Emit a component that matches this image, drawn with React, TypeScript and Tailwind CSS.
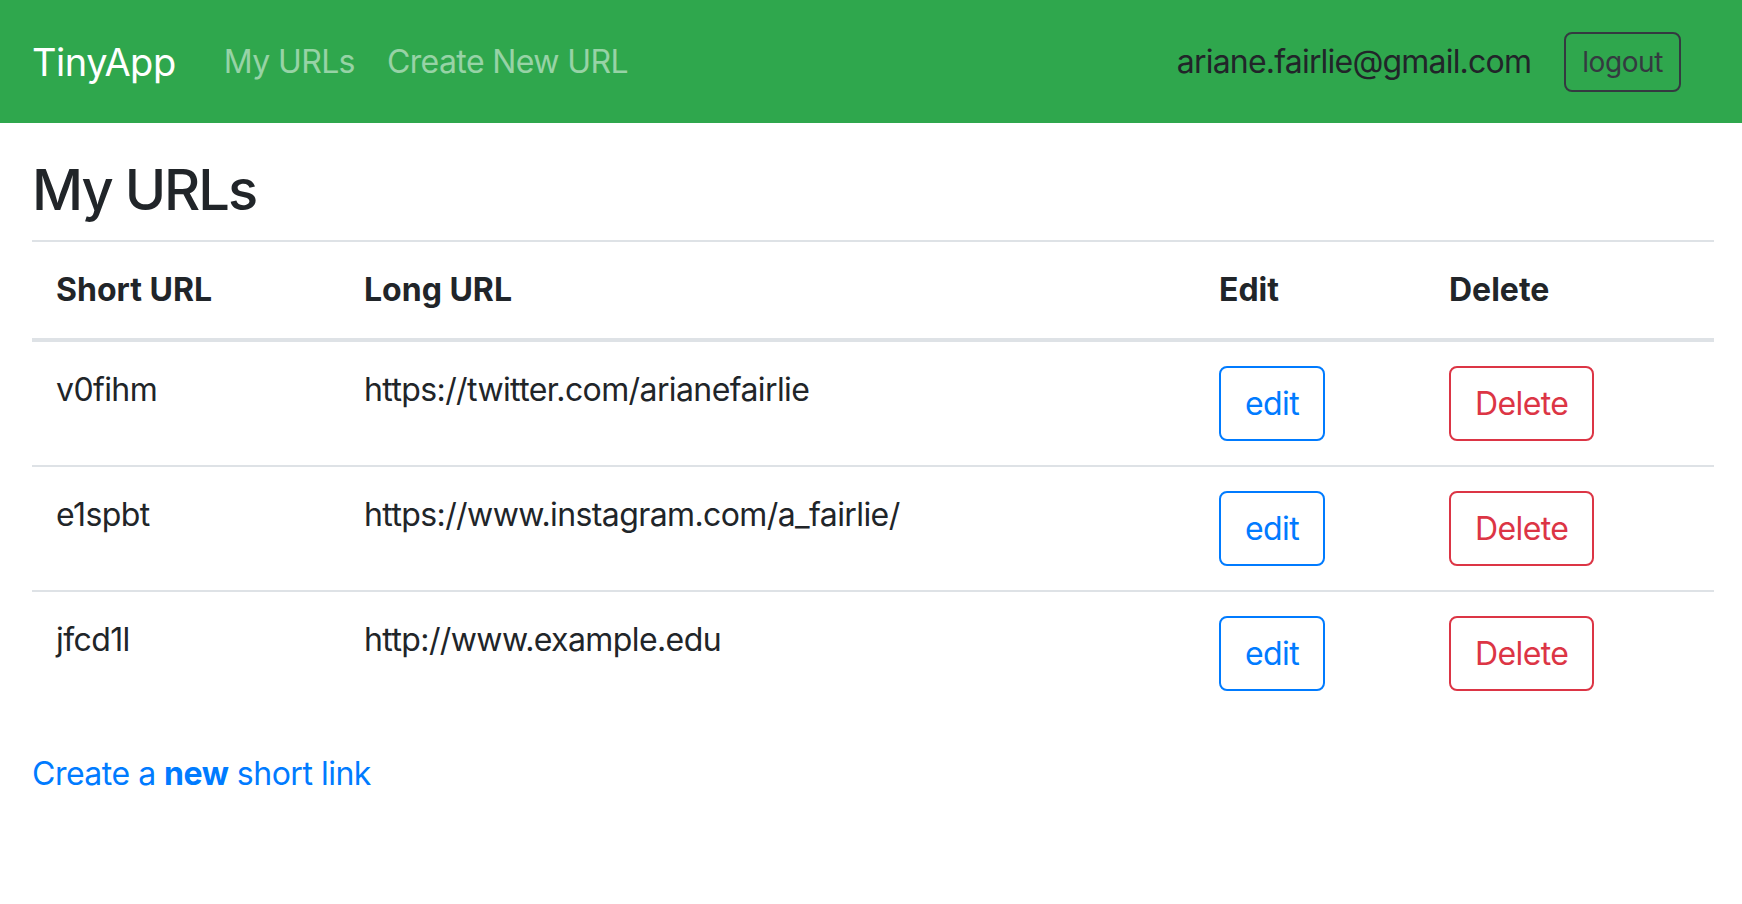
import React from 'react';

interface ShortUrl {
    id: string;
    longURL: string;
}

const urls: ShortUrl[] = [
    { id: 'v0fihm', longURL: 'https://twitter.com/arianefairlie' },
    { id: 'e1spbt', longURL: 'https://www.instagram.com/a_fairlie/' },
    { id: 'jfcd1l', longURL: 'http://www.example.edu' },
];

const Navbar: React.FC = () => (
    <nav className="flex h-[123px] items-center bg-[#2fa74d] pl-[32px] pr-[61px]">
        <a href="#" className="mr-[32px] text-[38px] leading-[48px] tracking-[-0.5px] text-white">TinyApp</a>
        <a href="#" className="px-[16px] text-[32px] leading-[48px] tracking-[-0.6px] text-white/50">My URLs</a>
        <a href="#" className="px-[16px] text-[32px] leading-[48px] tracking-[-0.6px] text-white/50">Create New URL</a>
        <div className="ml-auto flex items-center gap-[33px]">
            <span className="text-[32px] leading-[48px] tracking-[-0.8px] text-[#212529]">ariane.fairlie@gmail.com</span>
            <button className="h-[60px] rounded-[8px] border-2 border-[#343a40] px-[16px] text-[28px] leading-[42px] tracking-[-0.4px] text-[#343a40]">
                logout
            </button>
        </div>
    </nav>
);

export default function App() {
    return (
        <div className="min-h-screen bg-white font-['Inter',sans-serif] text-[#212529]">
            <Navbar />
            <main className="pl-[32px] pr-[28px] pt-[34px]">
                <h3 className="mb-[16px] text-[56px] font-medium leading-[67px] tracking-[-2px]">My URLs</h3>
                <table className="mb-[35px] w-full border-collapse text-left text-[32px] leading-[48px] tracking-[-0.6px]">
                    <thead>
                        <tr>
                            <th className="w-[308px] border-t-2 border-b-4 border-[#dee2e6] px-[24px] py-[24px] font-bold tracking-normal">Short URL</th>
                            <th className="w-[855px] border-t-2 border-b-4 border-[#dee2e6] px-[24px] py-[24px] font-bold tracking-normal">Long URL</th>
                            <th className="w-[230px] border-t-2 border-b-4 border-[#dee2e6] px-[24px] py-[24px] font-bold tracking-normal">Edit</th>
                            <th className="border-t-2 border-b-4 border-[#dee2e6] px-[24px] py-[24px] font-bold tracking-normal">Delete</th>
                        </tr>
                    </thead>
                    <tbody>
                        {urls.map(url => (
                            <tr key={url.id}>
                                <td className="border-t-2 border-[#dee2e6] px-[24px] py-[24px] align-top">{url.id}</td>
                                <td className="border-t-2 border-[#dee2e6] px-[24px] py-[24px] align-top">{url.longURL}</td>
                                <td className="border-t-2 border-[#dee2e6] px-[24px] py-[24px] align-top">
                                    <button className="rounded-[8px] border-2 border-[#007bff] px-[24px] py-[12px] text-[32px] leading-[47px] text-[#007bff]">
                                        edit
                                    </button>
                                </td>
                                <td className="border-t-2 border-[#dee2e6] px-[24px] py-[24px] align-top">
                                    <button className="rounded-[8px] border-2 border-[#dc3545] px-[24px] py-[12px] text-[32px] leading-[47px] text-[#dc3545]">
                                        Delete
                                    </button>
                                </td>
                            </tr>
                        ))}
                    </tbody>
                </table>
                <a href="#" className="text-[32px] leading-[48px] tracking-[-0.5px] text-[#007bff]">
                    Create a <b className="font-bold">new</b> short link
                </a>
            </main>
        </div>
    );
}
